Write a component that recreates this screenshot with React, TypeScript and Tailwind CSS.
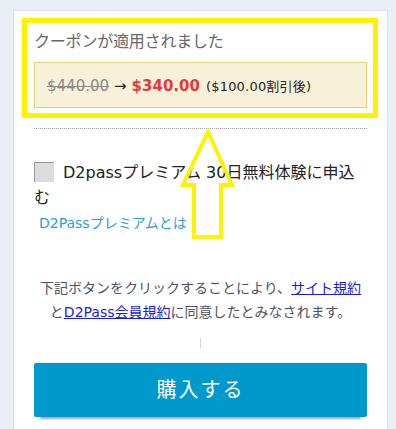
import React from 'react';

const font = { fontFamily: '"DejaVu Sans", "Noto Sans CJK JP", sans-serif' };

const App: React.FC = () => {
  return (
    <div className="min-h-[429px] bg-[#eaeef5] pt-[10px] px-[8px] overflow-hidden" style={font}>
      <div className="relative ml-[5px] w-[375px] min-h-[440px] bg-white border border-[#dcdfe4] px-5 pt-[19px]">
        {/* Coupon */}
        <p className="text-[16px] leading-[24px] text-[#666] tracking-[-0.2px]">クーポンが適用されました</p>
        <div className="mt-2 h-[46px] flex items-center pl-3 pt-[3px] bg-[#f8f1da] border border-[#e6ce72]">
          <span className="text-[15px] text-[#8a8a8a] line-through">$440.00</span>
          <span className="text-[15px] text-[#222] ml-[5px]">→</span>
          <span className="text-[15px] font-bold text-[#e8383d] ml-[5px]">$340.00</span>
          <span className="text-[13px] text-[#222] ml-[6px] tracking-[0.2px]">($100.00割引後)</span>
        </div>

        <div className="mt-5 border-t border-dotted border-[#999]" />

        {/* Premium */}
        <div className="mt-[31px] text-[16px] leading-[25px] text-[#222]">
          <span className="inline-block w-[20px] h-[20px] align-[-4px] mr-[9px] bg-[#dcdcdc] border-l border-t border-[#999]" />
          D2passプレミアム 30日無料体験に申込む
        </div>
        <a className="block ml-[5px] mt-[3px] text-[14px] leading-[20px] text-[#2aa0d6]">D2Passプレミアムとは</a>

        {/* Terms */}
        <p className="mt-[43px] text-center text-[14px] leading-[24px] text-[#4f5260]">
          下記ボタンをクリックすることにより、<a className="text-[#1a1aee] underline">サイト規約</a>
          <br />
          と<a className="text-[#1a1aee] underline">D2Pass会員規約</a>に同意したとみなされます。
        </p>
        <div className="mx-auto mt-[14px] w-px h-[10px] bg-[#dccfd6]" />

        <button className="mt-[15px] w-full h-[54px] rounded-[2px] bg-[#0099cc] text-white text-[20px] tracking-[2px] shadow-[0_8px_2px_-6px_rgba(0,0,0,0.35)]">
          購入する
        </button>

        {/* Annotation overlay */}
        <div className="absolute left-[8px] top-[7px] w-[356px] h-[100px] border-[5px] border-[#fff200] pointer-events-none" />
        <svg className="absolute left-[-14px] top-[-10px] pointer-events-none" width="396" height="260" viewBox="0 0 396 260">
          <polygon
            points="208,131 232,184 221,184 221,236 194,236 194,184 183,184"
            fill="none"
            stroke="#fff200"
            strokeWidth="4"
            strokeLinejoin="miter"
          />
        </svg>
      </div>
    </div>
  );
};

export default App;
